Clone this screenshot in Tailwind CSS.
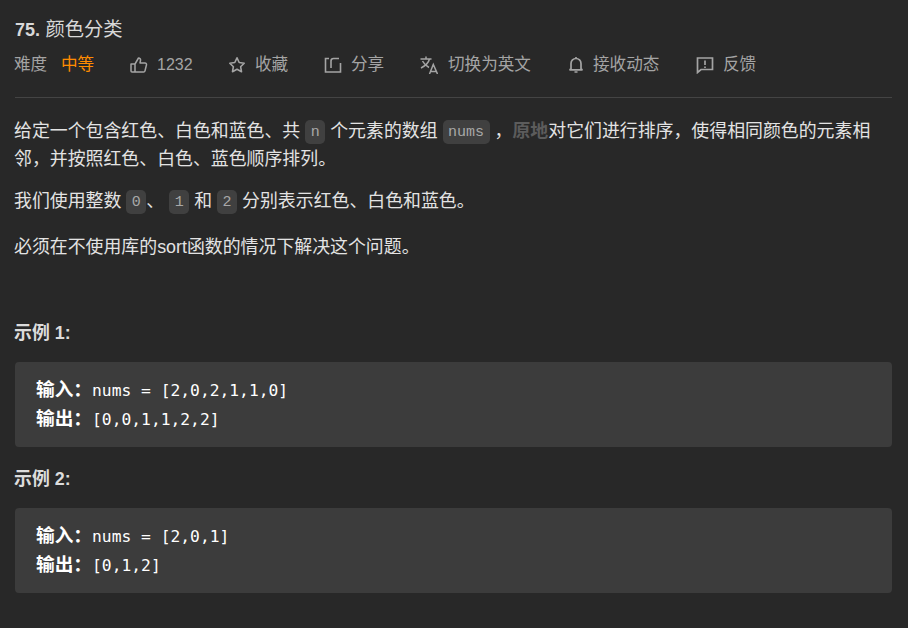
<!DOCTYPE html>
<html lang="zh">
<head>
<meta charset="utf-8">
<script src="https://cdn.jsdelivr.net/npm/@tailwindcss/browser@4"></script>
</head>
<body class="m-0 bg-[#282828] font-['Liberation_Sans','Noto_Sans_CJK_SC',sans-serif]">
<div class="w-[908px] h-[628px] overflow-hidden pl-[15px] pr-[16px] text-[17.900px] text-[#e3e3e3]">
  <div class="pt-[17px] h-[44px] text-[19.300px] leading-[26px] text-[#d8d8d8]"><span class="font-bold text-[18px]">75.</span> 颜色分类</div>
  <div class="flex items-center border-b border-[#444] h-[54px] pb-[11px] text-[16.600px] text-[#a4a4a4] leading-[24px]">
    <span class="w-[47px] -ml-px">难度</span>
    <span class="w-[69px] text-[#ff8c00]">中等</span>
    <span class="flex items-center w-[98px]">
      <svg class="w-[18px] h-[18px] mr-[9px]" viewBox="0 0 18 18" fill="none" stroke="#a4a4a4" stroke-width="1.5" stroke-linejoin="round"><path d="M1 8h4v8H2a1 1 0 0 1-1-1zM5 8l3.500-6c1.500 0 2.300 1 2 2.500L10 7h5a1.500 1.500 0 0 1 1.500 1.800L15 14.800A1.500 1.500 0 0 1 13.500 16H5"/></svg><span class="text-[16px]">1232</span></span>
    <span class="flex items-center w-[96px]">
      <svg class="w-[18px] h-[18px] mr-[9px]" viewBox="0 0 18 18" fill="none" stroke="#a4a4a4" stroke-width="1.6" stroke-linejoin="round"><path d="M9 1.800l2.200 4.700 5 .7-3.600 3.500.9 5L9 13.300l-4.500 2.400.9-5L1.800 7.200l5-.7z"/></svg>收藏</span>
    <span class="flex items-center w-[96px]">
      <svg class="w-[18px] h-[18px] mr-[9px]" viewBox="0 0 18 18" fill="none" stroke="#a4a4a4" stroke-width="1.6"><path d="M5 2.500H1.500v13.500h15V7M7 12V5c0-1.500 1-2.500 2.500-2.500H15"/></svg>分享</span>
    <span class="flex items-center w-[148px]">
      <svg class="w-[18px] h-[18px] mr-[10px]" viewBox="0 0 18 18" fill="none" stroke="#a4a4a4" stroke-width="1.5"><path d="M0.500 3h11M6 0.500V3M9.500 3C8.500 7 5 10 1 12M2.500 5C4 8 6.500 10 9 11.500M9.500 18l3.800-9.500L17.500 18M10.500 15.500h6"/></svg>切换为英文</span>
    <span class="flex items-center w-[128px]">
      <svg class="w-[16px] h-[18px] mr-[9px]" viewBox="0 0 16 18" fill="none" stroke="#a4a4a4" stroke-width="1.7"><path d="M3 13V7.500a5 5 0 0 1 10 0V13l1.500.8h-13zM8 1v1.500M6.500 16h3"/></svg>接收动态</span>
    <span class="flex items-center">
      <svg class="w-[18px] h-[18px] mr-[9px]" viewBox="0 0 18 18" fill="none" stroke="#a4a4a4" stroke-width="1.7"><path d="M1.500 2h15v11.500H5l-3.500 3zM9 4.500v4.500M9 10.500v1.500"/></svg>反馈</span>
  </div>
  <div class="leading-[28px] mt-[19px] -ml-px">
    <p>给定一个包含红色、白色和蓝色、共 <code class="bg-[#404040] rounded-[5px] px-[5.500px] py-[3.500px] align-[1.500px] text-[15px] leading-none font-['Liberation_Mono',monospace] text-[#a8a8a8]">n</code> 个元素的数组 <code class="bg-[#404040] rounded-[5px] px-[5.500px] py-[3.500px] align-[1.500px] text-[15px] leading-none font-['Liberation_Mono',monospace] text-[#a8a8a8]">nums</code> ，<strong class="text-[#5c5c5c]">原地</strong>对它们进行排序，使得相同颜色的元素相邻，并按照红色、白色、蓝色顺序排列。</p>
    <p class="mt-[14px]">我们使用整数 <code class="bg-[#404040] rounded-[5px] px-[5.500px] py-[3.500px] align-[1.500px] text-[15px] leading-none font-['Liberation_Mono',monospace] text-[#a8a8a8]">0</code>、 <code class="bg-[#404040] rounded-[5px] px-[5.500px] py-[3.500px] align-[1.500px] text-[15px] leading-none font-['Liberation_Mono',monospace] text-[#a8a8a8]">1</code> 和 <code class="bg-[#404040] rounded-[5px] px-[5.500px] py-[3.500px] align-[1.500px] text-[15px] leading-none font-['Liberation_Mono',monospace] text-[#a8a8a8]">2</code> 分别表示红色、白色和蓝色。</p>
    <p class="mt-[18px]">必须在不使用库的sort函数的情况下解决这个问题。</p>
    <p class="mt-[58px] font-bold text-[#dcdcdc]">示例 1:</p>
  </div>
  <div class="mt-[15px] h-[85px] bg-[#3c3c3c] rounded-[4px] px-[21px] pt-[14px] text-[16.300px] leading-[28px] text-white font-['DejaVu_Sans_Mono','Noto_Sans_CJK_SC',monospace]"><div><b class="text-[18.700px] font-['Liberation_Sans','Noto_Sans_CJK_SC',sans-serif]">输入：</b>nums = [2,0,2,1,1,0]</div><div><b class="text-[18.700px] font-['Liberation_Sans','Noto_Sans_CJK_SC',sans-serif]">输出：</b>[0,0,1,1,2,2]</div></div>
  <div class="mt-[18px] -ml-px leading-[28px] font-bold text-[#dcdcdc]">示例 2:</div>
  <div class="mt-[15px] h-[85px] bg-[#3c3c3c] rounded-[4px] px-[21px] pt-[14px] text-[16.300px] leading-[28px] text-white font-['DejaVu_Sans_Mono','Noto_Sans_CJK_SC',monospace]"><div><b class="text-[18.700px] font-['Liberation_Sans','Noto_Sans_CJK_SC',sans-serif]">输入：</b>nums = [2,0,1]</div><div><b class="text-[18.700px] font-['Liberation_Sans','Noto_Sans_CJK_SC',sans-serif]">输出：</b>[0,1,2]</div></div>
</div>
</body>
</html>
